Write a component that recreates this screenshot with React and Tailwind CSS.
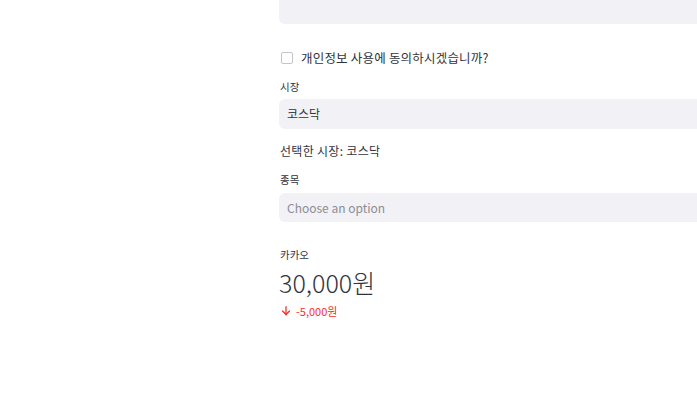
import React from "react";

const font = { fontFamily: '"Noto Sans CJK KR", "Noto Sans", sans-serif' };

export default function App() {
  return (
    <div className="w-full h-[410px] overflow-hidden bg-white text-[#31333f]" style={font}>
      <div className="ml-[279px] flex w-[440px] flex-col">
        <div className="h-[24px] w-full rounded-b-[6px] bg-[#f1f1f6]" />

        <label className="mt-[26px] flex h-[16px] items-center gap-[8px] pl-[2px]">
          <span className="h-[12px] w-[12px] rounded-[2px] border border-[#c4c5cc] bg-white" />
          <span className="text-[12.5px] leading-[16px] tracking-[0.2px]">개인정보 사용에 동의하시겠습니까?</span>
        </label>

        <div className="mt-[14px] h-[14px] text-[10.5px] leading-[14px] pl-[1px]">시장</div>
        <div className="mt-[5px] flex h-[30px] items-center rounded-[6px] bg-[#f1f1f6] pl-[8px] text-[12px]">
          코스닥
        </div>

        <div className="mt-[13px] h-[18px] text-[12px] leading-[18px] pl-[1px] tracking-[0.3px]">선택한 시장: 코스닥</div>

        <div className="mt-[13px] h-[14px] text-[10.5px] leading-[14px] pl-[1px]">종목</div>
        <div className="mt-[6px] flex h-[29px] items-center rounded-[6px] bg-[#f1f1f6] pl-[8px] text-[12px] text-[#8c8d96]">
          Choose an option
        </div>

        <div className="mt-[26px] h-[14px] text-[10.5px] leading-[14px] pl-[1px]">카카오</div>
        <div className="mt-[5px] h-[30px] text-[25px] font-light leading-[30px]">30,000원</div>
        <div className="mt-[7px] flex h-[14px] items-center gap-[4px] pl-[1px] text-[11px] leading-[14px] text-[#ff2b2b]">
          <svg width="12" height="12" viewBox="0 0 24 24" fill="none" stroke="#ff2b2b" strokeWidth="2.6" strokeLinecap="square">
            <path d="M12 4v15" />
            <path d="M5 12l7 7 7-7" strokeLinecap="round" strokeLinejoin="miter" />
          </svg>
          <span>-5,000원</span>
        </div>
      </div>
    </div>
  );
}
